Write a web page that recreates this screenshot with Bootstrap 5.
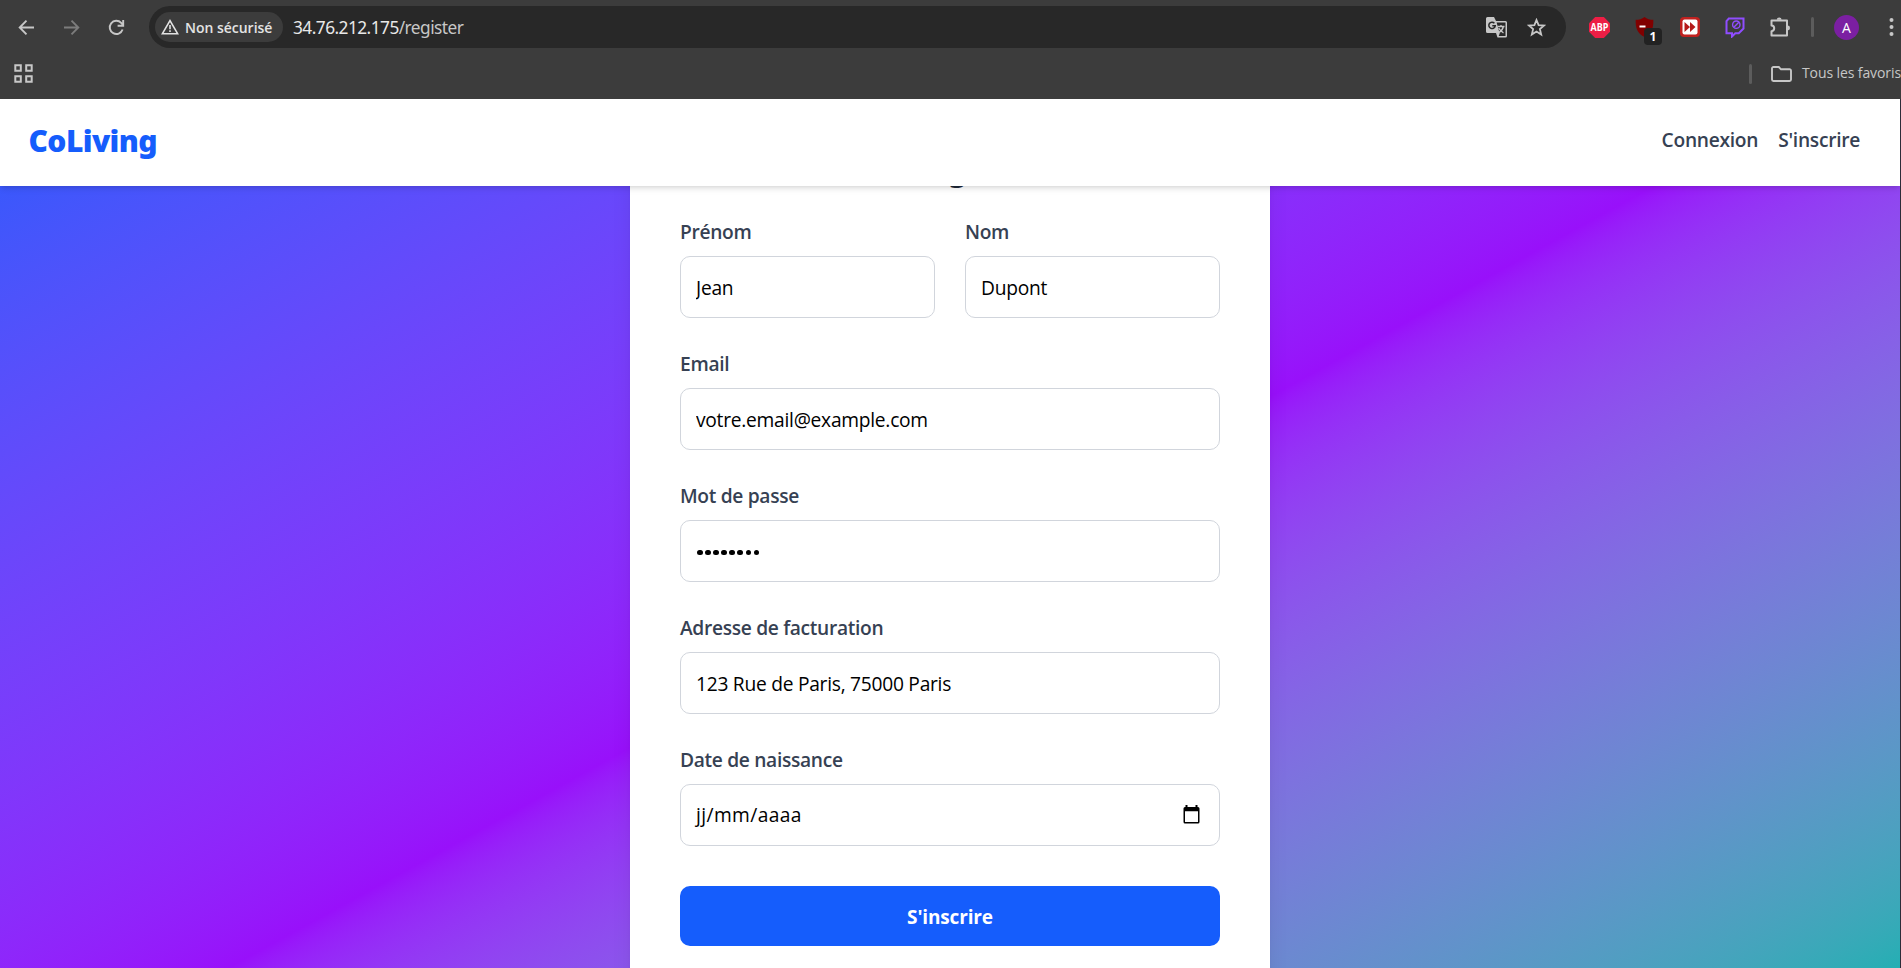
<!DOCTYPE html>
<html lang="fr">
<head>
<meta charset="utf-8">
<title>CoLiving</title>
<link rel="stylesheet" href="https://cdn.jsdelivr.net/npm/bootstrap@5.3.0/dist/css/bootstrap.min.css">
<style>
body{font-family:"Open Sans","Noto Sans",sans-serif;overflow:hidden;height:968px;background:#fff}
svg{display:block;flex:none}
.chrome{height:99px;background:#3c3c3c;color:#c7c7c7}
.toolbar{height:54px;padding-left:4px;padding-top:0}
.tool{width:45px;height:54px;flex:none}
.omnibox{height:42px;margin-left:10px;width:1417px;border-radius:21px;background:#282828;padding:0 20px 0 6px;margin-right:11px;flex:none}
.chip{height:30px;width:128px;border-radius:15px;background:#3c3c3c;padding-left:6px;gap:6px;color:#e3e3e3;font-size:14px;font-weight:600;letter-spacing:-.02px;white-space:nowrap}
.address{font-family:"Noto Sans",sans-serif;font-size:17.3px;letter-spacing:-.54px;margin-left:10px;padding-top:2px;color:#c7c7c7}
.address b{font-weight:400;color:#e8e8e8}
.vsep{width:3px;height:20px;border-radius:2px;background:#5c5c5c}
.avatar{width:25px;height:25px;background:#7b1fa2;color:#fff;font-size:14px}
.count{left:22px;top:28px;width:18px;height:17px;border-radius:4px;background:#222;color:#fff;font-size:12px;line-height:17px}
.bookmarks{height:39px;padding-left:14px;font-size:14px}
.page-view{height:869px;width:1900px;overflow:hidden;box-shadow:1px 0 0 #2c2c38;
 background:linear-gradient(to bottom right in oklab,oklch(.546 .245 262.881) 0%,oklch(.558 .288 302.321) 50%,oklch(.704 .14 182.503) 100%) 0 -48px/1900px 1042px no-repeat}
.site-nav{height:87px;padding:0 40px 0 28.5px;background:#fff;z-index:5;box-shadow:0 4px 6px -1px rgba(0,0,0,.1),0 2px 4px -2px rgba(0,0,0,.1);--bs-navbar-padding-y:0}
.brand{font-family:"Noto Sans",sans-serif;font-size:30px;font-weight:900;color:#155dfc;letter-spacing:-.6px;line-height:40px;padding-bottom:4px}
.site-nav .nav-link{font-size:19.2px;font-weight:600;letter-spacing:-.28px;color:#364153;padding:0;line-height:30px;margin-top:-5px}
.signup{width:640px;height:920px;margin-top:-70px;padding:50px;background:#fff;border:0;border-radius:10px;box-shadow:0 20px 25px -5px rgba(0,0,0,.1),0 8px 10px -6px rgba(0,0,0,.1)}
.signup h2{font-family:"Noto Sans",sans-serif;font-size:30px;font-weight:700;line-height:45px;height:45px;color:#1e2939;margin:-19.5px 0 24.5px;padding-left:6px}
.signup .form-label{font-size:19.2px;font-weight:600;letter-spacing:-.32px;line-height:30px;padding-top:1px;height:30px;margin-bottom:10px;color:#364153;display:block}
.signup .form-control{height:62px;border:1px solid #d1d5dc;border-radius:10px;padding:1px 15px 0;font-size:19.2px;color:#000;letter-spacing:-.26px;background:#fff}
.signup .pair{gap:30px}
.signup .btn{height:60px;border:0;border-radius:10px;background:#155dfc;color:#fff;font-size:19px;font-weight:700;letter-spacing:-.15px;margin-top:10px;padding-top:8px}
.stack-fields{gap:30px}
.signup .dots{gap:2.5px;padding:3px 16px 0}
.dots i{width:5.6px;height:5.6px;border-radius:50%;background:#000}
</style>
</head>
<body>
<header class="chrome">
 <div class="toolbar d-flex align-items-center">
  <div class="tool d-flex align-items-center justify-content-center"><svg width="17" height="17" viewBox="0 0 17 17" fill="none" stroke="#c7c7c7" stroke-width="1.9"><path d="M16 8.5H2M8.5 1.6 1.7 8.5l6.8 6.9"/></svg></div>
  <div class="tool d-flex align-items-center justify-content-center"><svg width="17" height="17" viewBox="0 0 17 17" fill="none" stroke="#7c7c7c" stroke-width="1.9"><path d="M1 8.5h14M8.5 1.6l6.8 6.9-6.8 6.9"/></svg></div>
  <div class="tool d-flex align-items-center justify-content-center"><svg width="17" height="17" viewBox="0 0 17 17" fill="none" stroke="#c7c7c7" stroke-width="1.9"><path d="M14.6 10.5A6.6 6.6 0 1 1 13.2 3.9L15 6M15.2 1v5.7H9.6"/></svg></div>
  <div class="omnibox d-flex align-items-center">
   <div class="chip d-flex align-items-center"><svg width="18" height="16" viewBox="0 0 18 16" fill="none" stroke="#e3e3e3" stroke-width="1.6"><path d="M9 1.6 16.6 14.7H1.4zM9 6v4.3M9 11.3v1.8"/></svg><span>Non sécurisé</span></div>
   <div class="address"><b>34.76.212.175</b>/register</div>
   <svg class="ms-auto" width="21" height="21" viewBox="0 0 21 21"><path d="M1.5 0H8l2 4h9.5a1.5 1.5 0 0 1 1.5 1.5v13.5a1.5 1.5 0 0 1-1.5 1.5H11.5L10 16H1.5A1.5 1.5 0 0 1 0 14.5v-13A1.5 1.5 0 0 1 1.5 0z" fill="#c7c7c7"/><path d="M10.6 5.5h8.9v13.5h-6.8l1-2.5z" fill="#282828"/><path d="M8.4 6.2a3.2 3.2 0 1 0 .8 2.6H6.3" fill="none" stroke="#282828" stroke-width="1.5"/><path d="M11.5 9.5h7M15 8v1.5M17.4 9.5c-.5 2.5-2.2 4.7-4.5 6M12.7 11c1 2 2.6 3.7 4.8 4.8" fill="none" stroke="#c7c7c7" stroke-width="1.3"/></svg>
   <svg style="margin-left:20px" width="19" height="19" viewBox="0 0 19 19" fill="none" stroke="#c7c7c7" stroke-width="1.8"><path d="m9.5 2 2.1 5.1 5.5.4-4.2 3.600 1.300 5.400-4.700-2.900-4.700 2.900 1.300-5.400-4.200-3.600 5.500-.4z"/></svg>
  </div>
  <div class="tool d-flex align-items-center justify-content-center"><svg width="21" height="21" viewBox="0 0 21 21"><path d="M6.200 0h8.600L21 6.200v8.600L14.800 21H6.200L0 14.800V6.200z" fill="#ed1e45"/><text x="10.5" y="14.2" font-family="Open Sans,sans-serif" font-size="10.5" font-weight="700" fill="#fff" text-anchor="middle" textLength="17.8" lengthAdjust="spacingAndGlyphs">ABP</text></svg></div>
  <div class="tool d-flex align-items-center justify-content-center position-relative"><svg width="19" height="20" viewBox="0 0 19 20"><path d="M9.500 0c2.500 2 5.500 2.800 8.800 2.800.3 7.500-1 13.500-8.800 17.200C1.700 16.300.4 10.300.7 2.800 4 2.800 7 2 9.500 0z" fill="#800000"/><path d="M4.500 9.500h6" stroke="#fff" stroke-width="2"/></svg><span class="count position-absolute text-center fw-bold">1</span></div>
  <div class="tool d-flex align-items-center justify-content-center"><svg width="20" height="20" viewBox="0 0 20 20"><rect width="20" height="20" rx="4" fill="#c0211f"/><rect x="2.500" y="2.500" width="15" height="15" rx="2" fill="#fff"/><path d="M4.500 5 10 10l-5.500 5zM10 5l5.500 5-5.500 5z" fill="#b51a1a"/></svg></div>
  <div class="tool d-flex align-items-center justify-content-center"><svg width="20" height="21" viewBox="0 0 20 21" fill="none" stroke="#8f4dff" stroke-width="2"><path d="M3.800 1.500H18.500v10l-4.700 4.700h-3.500L7 19.500v-3.300H1.500v-12z"/><circle cx="11.300" cy="7.700" r="3.700" stroke-width="1.400"/><path d="m8.800 10.200 5-5" stroke-width="1.400"/></svg></div>
  <div class="tool d-flex align-items-center justify-content-center"><svg width="21" height="21" viewBox="0 0 21 21" fill="none" stroke="#c7c7c7" stroke-width="2"><path d="M2.500 3.500H18v15H2.500v-4.300c3.600-.3 3.600-5.500 0-5.800z" stroke-linejoin="round"/><path d="M7.800 2.800a2.400 2.400 0 0 1 4.800 0zM18.600 8.600a2.400 2.400 0 0 1 0 4.800z" fill="#c7c7c7" stroke="none"/></svg></div>
  <div class="d-flex justify-content-center flex-shrink-0" style="width:21px"><span class="vsep"></span></div>
  <div class="d-flex justify-content-center flex-shrink-0" style="width:47px"><span class="avatar rounded-circle d-flex align-items-center justify-content-center">A</span></div>
  <svg style="margin-left:19px" width="5" height="18" viewBox="0 0 5 18" fill="#c7c7c7"><circle cx="2.500" cy="2" r="2"/><circle cx="2.500" cy="9" r="2"/><circle cx="2.500" cy="16" r="2"/></svg>
 </div>
 <div class="bookmarks d-flex align-items-center text-nowrap">
  <svg width="19" height="19" viewBox="0 0 19 19" fill="none" stroke="#c7c7c7" stroke-width="2"><path d="M1.300 1.300h5.500v5.500H1.300zM12.200 1.300h5.500v5.500h-5.500zM1.300 12.200h5.500v5.500H1.300zM12.200 12.200h5.500v5.500h-5.500z"/></svg>
  <span class="vsep flex-shrink-0" style="margin-left:1716px"></span>
  <svg style="margin-left:19px" width="21" height="16" viewBox="0 0 21 16" fill="none" stroke="#c7c7c7" stroke-width="1.900"><path d="M2.500 1h5.300l2.200 2.300h8.500A1.400 1.400 0 0 1 20 4.700v8.900a1.400 1.400 0 0 1-1.400 1.400H2.400A1.400 1.400 0 0 1 1 13.600V2.400A1.400 1.400 0 0 1 2.500 1z"/></svg>
  <span style="margin-left:10px;padding-bottom:2px;letter-spacing:-.1px">Tous les favoris</span>
 </div>
</header>
<div class="page-view">
 <nav class="navbar site-nav position-relative d-flex justify-content-between align-items-center flex-nowrap">
  <a class="brand text-decoration-none" href="#">CoLiving</a>
  <div class="d-flex" style="gap:20px"><a class="nav-link" href="#">Connexion</a><a class="nav-link" href="#">S'inscrire</a></div>
 </nav>
 <main class="card signup mx-auto">
  <h2 class="text-center">S'enregistrer</h2>
  <form class="d-flex flex-column stack-fields">
   <div class="d-flex pair">
    <div class="flex-fill"><label class="form-label" for="first">Prénom</label><input id="first" class="form-control" value="Jean"></div>
    <div class="flex-fill"><label class="form-label" for="last">Nom</label><input id="last" class="form-control" value="Dupont"></div>
   </div>
   <div><label class="form-label" for="mail">Email</label><input id="mail" class="form-control" value="votre.email@example.com"></div>
   <div><span class="form-label">Mot de passe</span><div class="form-control d-flex align-items-center dots"><i></i><i></i><i></i><i></i><i></i><i></i><i></i><i></i></div></div>
   <div><label class="form-label" for="addr">Adresse de facturation</label><input id="addr" class="form-control" value="123 Rue de Paris, 75000 Paris"></div>
   <div><span class="form-label">Date de naissance</span><div class="form-control d-flex align-items-center justify-content-between"><span style="letter-spacing:.4px">jj/mm/aaaa</span><svg style="margin-right:4px;margin-top:-3px" width="17" height="19" viewBox="0 0 17 19"><path d="M2.500 0h2v2h8V0h2v2h.5a1.500 1.500 0 0 1 1.500 1.500v13.500a1.500 1.500 0 0 1-1.500 1.500H2A1.500 1.500 0 0 1 .5 17V3.500A1.500 1.500 0 0 1 2 2h.5zM2 6.200V17h13V6.200z" fill="#000" fill-rule="evenodd"/></svg></div></div>
   <button type="button" class="btn w-100">S'inscrire</button>
  </form>
 </main>
</div>
<script src="https://cdn.jsdelivr.net/npm/bootstrap@5.3.0/dist/js/bootstrap.bundle.min.js"></script>
</body>
</html>
